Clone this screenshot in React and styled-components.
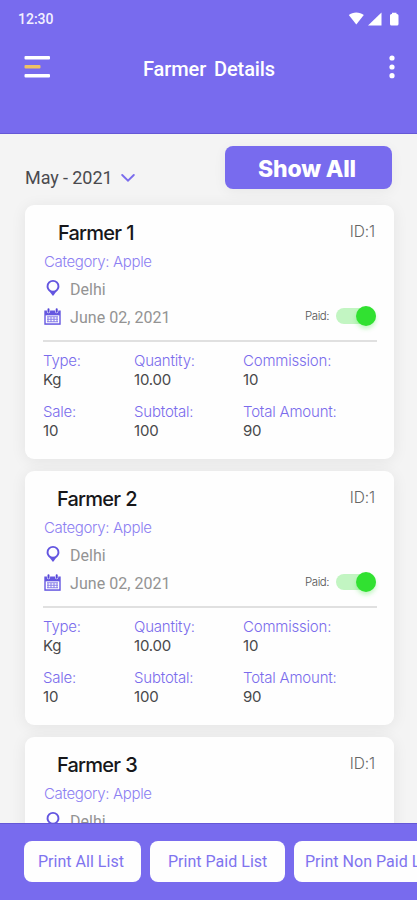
import React from "react";
import styled, { createGlobalStyle } from "styled-components";

const GlobalStyle = createGlobalStyle`
  *, *::before, *::after { box-sizing: border-box; }
  body { margin: 0; font-family: Inter, Roboto, "Liberation Sans", sans-serif; }
  button { font-family: inherit; border: 0; padding: 0; background: none; cursor: pointer; }
`;

const purple = "#786bee";

const Screen = styled.div`
  width: 417px;
  height: 900px;
  display: flex;
  flex-direction: column;
  overflow: hidden;
  background: #f4f4f4;
`;

const Header = styled.header`
  flex: 0 0 134px;
  background: ${purple};
  border-bottom: 1px solid #6558d6;
  color: #fff;
`;

const StatusBar = styled.div`
  height: 37px;
  padding: 0 17px 0 18px;
  display: flex;
  align-items: center;
  justify-content: space-between;
`;

const Clock = styled.span`
  font: 500 14px/20px Roboto, sans-serif;
  color: #f3f1ff;
`;

const StatusIcons = styled.svg`
  display: block;
  width: 52px;
  height: 16px;
`;

const TitleBar = styled.div`
  height: 60px;
  padding: 0 20px 0 24px;
  display: grid;
  grid-template-columns: 26px 1fr 10px;
  align-items: center;
`;

const Title = styled.h1`
  margin: 4px 0 0 93px;
  font: 500 20px/26px Roboto, sans-serif;
  letter-spacing: -0.1px;
  word-spacing: 3px;
  white-space: nowrap;
`;

const IconButton = styled.button`
  display: flex;
`;

const Content = styled.main`
  flex: 1;
  min-height: 0;
  overflow: hidden;
  padding: 0 23px 0 25px;
`;

const FilterRow = styled.div`
  height: 71px;
  display: flex;
  justify-content: space-between;
  align-items: flex-start;
  padding: 12px 2px 0 0;
`;

const MonthSelect = styled.button`
  display: flex;
  align-items: center;
  gap: 9px;
  margin-top: 20px;
  font: 400 18px/24px Roboto, sans-serif;
  letter-spacing: -0.08px;
  color: #4a4a4e;
`;

const ShowAll = styled.button`
  width: 167px;
  height: 43px;
  padding: 3px 3px 0 0;
  border-radius: 8px;
  background: ${purple};
  box-shadow: 0 3px 14px rgba(0, 0, 0, 0.05);
  color: #fff;
  font-weight: 800;
  font-size: 23px;
  letter-spacing: -0.2px;
`;

const CardList = styled.div`
  display: flex;
  flex-direction: column;
  gap: 12px;
`;

const Card = styled.article`
  flex: none;
  height: 254px;
  padding: 15px 17px 0 18px;
  border-radius: 9px;
  background: #fefefe;
  box-shadow: 0 2px 16px rgba(0, 0, 0, 0.07);
`;

const CardHead = styled.div`
  display: flex;
  align-items: center;
  justify-content: space-between;
  height: 26px;
  padding: 0 2px 0 ${(p) => p.$indent}px;
`;

const Name = styled.h2`
  margin: 0;
  font-size: 20px;
  font-weight: 500;
  letter-spacing: -0.8px;
  word-spacing: 0.5px;
  color: #17171a;
`;

const FarmerId = styled.span`
  margin-top: -3px;
  font-size: 15.5px;
  font-weight: 300;
  letter-spacing: -0.1px;
  color: #666;
`;

const Category = styled.div`
  margin: 5px 0 0 1px;
  height: 22px;
  font-size: 15px;
  font-weight: 300;
  line-height: 22px;
  letter-spacing: -0.35px;
  color: #8d80f2;
`;

const InfoRows = styled.div`
  padding-top: 3px;
`;

const InfoRow = styled.div`
  display: flex;
  align-items: center;
  height: 28px;
  padding-right: 1px;
`;

const InfoIcon = styled.svg`
  flex: none;
  width: 19px;
  height: 20px;
  margin: 0 8px 4px 0;
`;

const InfoText = styled.span`
  font: 400 16px/24px Roboto, sans-serif;
  letter-spacing: ${(p) => p.$spacing};
  color: #939393;
`;

const Paid = styled.div`
  display: flex;
  align-items: center;
  gap: 7px;
  margin-left: auto;
  margin-top: -5px;
  font-size: 11.5px;
  font-weight: 300;
  letter-spacing: -0.5px;
  color: #555;
`;

const Toggle = styled.button`
  display: flex;
  align-items: center;
  justify-content: flex-end;
  width: 40px;
  height: 16px;
  border-radius: 8px;
  background: #c2f5c2;
`;

const Knob = styled.span`
  width: 20px;
  height: 20px;
  flex: none;
  border-radius: 50%;
  background: #31e131;
  box-shadow: 0 3px 4px rgba(49, 225, 49, 0.28);
`;

const Divider = styled.hr`
  margin: 8px 0 9px;
  border: 0;
  height: 2px;
  background: #e0e0e0;
`;

const Facts = styled.dl`
  margin: 0;
  display: grid;
  grid-template-columns: 91px 109px 1fr;
  row-gap: 13px;
`;

const Label = styled.dt`
  font-size: 15px;
  font-weight: 300;
  line-height: 19px;
  letter-spacing: -0.2px;
  white-space: nowrap;
  color: #7a6cec;
`;

const Value = styled.dd`
  margin: 0;
  font-size: 15px;
  line-height: 19px;
  letter-spacing: -0.2px;
  color: #48484a;
`;

const Footer = styled.footer`
  flex: 0 0 77px;
  display: flex;
  align-items: flex-start;
  gap: 9px;
  padding: 17px 0 0 24px;
  overflow: hidden;
  background: ${purple};
  border-top: 1px solid #6558d6;
`;

const PrintButton = styled.button`
  flex: 0 0 ${(p) => p.$width}px;
  height: 41px;
  padding-left: ${(p) => p.$inset}px;
  border-radius: 8px;
  background: #fefefe;
  color: #8073ef;
  font: 400 16px/20px Roboto, sans-serif;
  letter-spacing: 0.02px;
  text-align: left;
  white-space: nowrap;
`;

const farmers = [
  { name: "Farmer 1", indent: 15 },
  { name: "Farmer 2", indent: 14 },
  { name: "Farmer 3", indent: 14 },
];

const facts = [
  ["Type:", "Kg"],
  ["Quantity:", "10.00"],
  ["Commission:", "10"],
  ["Sale:", "10"],
  ["Subtotal:", "100"],
  ["Total Amount:", "90"],
];

const printActions = [
  { label: "Print All List", width: 117, inset: 14 },
  { label: "Print Paid List", width: 135, inset: 18 },
  { label: "Print Non Paid List", width: 167, inset: 11 },
];

function PinIcon() {
  return (
    <InfoIcon viewBox="0 0 19 20">
      <path
        fillRule="evenodd"
        fill="#6355e0"
        d="M10 2a6.400 6.400 0 0 0-6.400 6.400c0 3.600 3.300 4.800 5 7.900l1.400 1.700 1.400-1.700c1.700-3.100 5-4.300 5-7.900A6.400 6.400 0 0 0 10 2Zm0 1.700a4.500 4.500 0 1 1 0 9 4.500 4.500 0 0 1 0-9Z"
      />
    </InfoIcon>
  );
}

function CalendarIcon() {
  return (
    <InfoIcon viewBox="0 0 19 20">
      <path fill="#6557e0" d="M1.300 4.500h16.400v14.300H1.300z" />
      <path fill="#fefefe" d="M2.700 9.300h13.600v8H2.700z" />
      <path stroke="#8b80ea" strokeWidth="1.100" d="M4 10.800h11M4 13.200h11M4 15.700h11M5 10.300v6M8 10.300v6M11 10.300v6M14 10.300v6" />
      <path stroke="#fefefe" strokeWidth="3.200" strokeLinecap="round" d="M5.500 3.600v2M13.700 3.600v2" />
      <path stroke="#5546d8" strokeWidth="2" strokeLinecap="round" d="M5.500 3.200v2.600M13.700 3.200v2.600" />
    </InfoIcon>
  );
}

function FarmerCard({ name, indent }) {
  return (
    <Card>
      <CardHead $indent={indent}>
        <Name>{name}</Name>
        <FarmerId>ID:1</FarmerId>
      </CardHead>
      <Category>Category: Apple</Category>
      <InfoRows>
        <InfoRow>
          <PinIcon />
          <InfoText $spacing="0">Delhi</InfoText>
        </InfoRow>
        <InfoRow>
          <CalendarIcon />
          <InfoText $spacing="0.05px">June 02, 2021</InfoText>
          <Paid>
            Paid:
            <Toggle aria-label="Paid">
              <Knob />
            </Toggle>
          </Paid>
        </InfoRow>
      </InfoRows>
      <Divider />
      <Facts>
        {facts.map(([label, value]) => (
          <div key={label}>
            <Label>{label}</Label>
            <Value>{value}</Value>
          </div>
        ))}
      </Facts>
    </Card>
  );
}

export default function App() {
  return (
    <Screen>
      <GlobalStyle />
      <Header>
        <StatusBar>
          <Clock>12:30</Clock>
          <StatusIcons viewBox="0 0 52 16" fill="#fff">
            <path d="M.8 4C4.500.500 12 .500 15.800 4L8.300 13.500Z" />
            <path d="M33.500 1.500V14.500H20Z" />
            <path d="M42 4.500q0-1.500 1.500-1.500H44V1.800h4.500V3h.500q1.500 0 1.500 1.500v8.500q0 1.500-1.500 1.500h-5.500q-1.500 0-1.500-1.500Z" />
          </StatusIcons>
        </StatusBar>
        <TitleBar>
          <IconButton aria-label="Menu">
            <svg width="26" height="24" viewBox="0 0 26 24">
              <rect x=".5" y="1" width="25.500" height="3.600" rx="1" fill="#fff" />
              <rect x=".5" y="10" width="16" height="3.600" rx="1" fill="#efc265" />
              <rect x=".5" y="19" width="25.500" height="3.600" rx="1" fill="#fff" />
            </svg>
          </IconButton>
          <Title>Farmer Details</Title>
          <IconButton aria-label="More options">
            <svg width="10" height="24" viewBox="0 0 10 24" fill="#fff">
              <circle cx="5" cy="3" r="2.600" />
              <circle cx="5" cy="12" r="2.600" />
              <circle cx="5" cy="20.700" r="2.600" />
            </svg>
          </IconButton>
        </TitleBar>
      </Header>
      <Content>
        <FilterRow>
          <MonthSelect>
            May - 2021
            <svg width="14" height="10" viewBox="0 0 14 10" fill="none">
              <path d="M1.200 2 7 7.600 12.800 2" stroke="#7a6cec" strokeWidth="1.900" strokeLinecap="round" />
            </svg>
          </MonthSelect>
          <ShowAll>Show All</ShowAll>
        </FilterRow>
        <CardList>
          {farmers.map((f) => (
            <FarmerCard key={f.name} {...f} />
          ))}
        </CardList>
      </Content>
      <Footer>
        {printActions.map((a) => (
          <PrintButton key={a.label} $width={a.width} $inset={a.inset}>
            {a.label}
          </PrintButton>
        ))}
      </Footer>
    </Screen>
  );
}
